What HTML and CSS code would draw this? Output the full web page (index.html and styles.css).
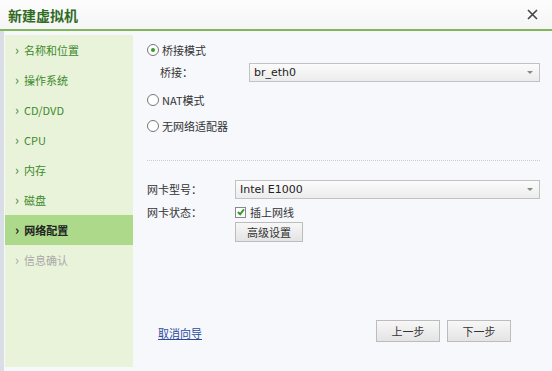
FILE: index.html
```html
<!DOCTYPE html>
<html>
<head>
    <title>新建虚拟机</title>
    <link rel="stylesheet" href="styles.css">
</head>
<body>
    <div class="dialog">
        <div class="title-bar">
            <span class="title">新建虚拟机</span>
            <svg class="close" width="11" height="11" viewBox="0 0 11 11">
                <path d="M1 1 L10 10 M10 1 L1 10" stroke="#444" stroke-width="1.6" fill="none"/>
            </svg>
        </div>
        <div class="content">
            <ul class="steps">
                <li>名称和位置</li>
                <li>操作系统</li>
                <li>CD/DVD</li>
                <li>CPU</li>
                <li>内存</li>
                <li>磁盘</li>
                <li class="active">网络配置</li>
                <li class="disabled">信息确认</li>
            </ul>
            <div class="main">
                <div class="mode-group">
                    <label class="radio-row"><span class="radio checked"></span>桥接模式</label>
                    <div class="field-row bridge-row">
                        <span class="bridge-label">桥接：</span>
                        <div class="select bridge-select">br_eth0<span class="arrow"></span></div>
                    </div>
                    <label class="radio-row nat-row"><span class="radio"></span>NAT模式</label>
                    <label class="radio-row"><span class="radio"></span>无网络适配器</label>
                </div>
                <div class="separator"></div>
                <div class="card-group">
                    <div class="field-row">
                        <span class="field-label">网卡型号：</span>
                        <div class="select card-select">Intel E1000<span class="arrow"></span></div>
                    </div>
                    <div class="field-row state-row">
                        <span class="field-label">网卡状态：</span>
                        <label class="check-row"><span class="checkbox"></span>插上网线</label>
                    </div>
                    <button type="button" class="btn advanced-btn">高级设置</button>
                </div>
                <div class="footer">
                    <a href="#" class="cancel-link">取消向导</a>
                    <div class="nav-buttons">
                        <button type="button" class="btn nav-btn">上一步</button>
                        <button type="button" class="btn nav-btn">下一步</button>
                    </div>
                </div>
            </div>
        </div>
    </div>
</body>
</html>
```
FILE: styles.css
```css
body {
    margin: 0;
    padding: 0;
    font-family: "Noto Sans CJK SC", "DejaVu Sans", sans-serif;
    font-size: 11px;
    color: #333;
}

.dialog {
    width: 552px;
    height: 371px;
    background-color: #f6f8fc;
    display: flex;
    flex-direction: column;
    overflow: hidden;
}

.title-bar {
    height: 29px;
    display: flex;
    align-items: center;
    justify-content: space-between;
    padding: 0 14px 0 8px;
    background: linear-gradient(#fdfdfd, #f5f5f5);
    border-bottom: 2px solid #7fb75a;
    flex-shrink: 0;
}

.title {
    font-size: 14px;
    font-weight: bold;
    color: #2f6b1f;
}

.close {
    display: block;
}

.content {
    flex: 1;
    display: flex;
    padding: 4px 0 4px 0;
    border-left: 4px solid #d9dde6;
}

.steps {
    list-style-type: none;
    margin: 0 0 0 1px;
    padding: 0;
    width: 128px;
    background-color: #e9f3da;
}

.steps li {
    height: 30px;
    line-height: 30px;
    padding-left: 10px;
    color: #3d8a2c;
}

.steps li::before {
    content: "\203A";
    margin-right: 5px;
    font-size: 13px;
}

.steps li.active {
    background-color: #acd98a;
    color: #222;
    font-weight: bold;
}

.steps li.disabled {
    color: #a8a8a8;
}

.main {
    flex: 1;
    display: flex;
    flex-direction: column;
    padding: 4px 12px 0 14px;
}

.radio-row {
    display: flex;
    align-items: center;
    height: 22px;
}

.nat-row {
    margin: 6px 0 4px 0;
}

.radio {
    width: 10px;
    height: 10px;
    border: 1px solid #777;
    border-radius: 50%;
    background-color: #fff;
    margin-right: 3px;
    position: relative;
}

.radio.checked::after {
    content: "";
    position: absolute;
    left: 3px;
    top: 3px;
    width: 4px;
    height: 4px;
    border-radius: 50%;
    background-color: #3a9a2a;
}

.field-row {
    display: flex;
    align-items: center;
    height: 20px;
}

.bridge-row {
    height: 22px;
}

.bridge-label {
    width: 89px;
    padding-left: 13px;
}

.field-label {
    width: 88px;
}

.select {
    flex: 1;
    height: 17px;
    line-height: 17px;
    border: 1px solid #c2c2c2;
    background: linear-gradient(#fbfbfb, #ececec);
    padding-left: 4px;
    font-family: "DejaVu Sans", sans-serif;
    font-size: 11px;
    color: #222;
    position: relative;
}

.arrow {
    position: absolute;
    right: 6px;
    top: 7px;
    border-left: 3px solid transparent;
    border-right: 3px solid transparent;
    border-top: 3px solid #888;
}

.separator {
    border-top: 1px dotted #c8ccd4;
    margin: 23px 0 18px 0;
}

.card-group {
    display: flex;
    flex-direction: column;
}

.state-row {
    margin-top: 3px;
}

.check-row {
    display: flex;
    align-items: center;
}

.checkbox {
    width: 9px;
    height: 9px;
    border: 1px solid #888;
    background-color: #fff;
    margin-right: 4px;
    position: relative;
}

.checkbox::after {
    content: "";
    position: absolute;
    left: 3px;
    top: 0;
    width: 2px;
    height: 5px;
    border: solid #3a9a2a;
    border-width: 0 2px 2px 0;
    transform: rotate(40deg);
}

.btn {
    font-family: "Noto Sans CJK SC", sans-serif;
    font-size: 11px;
    color: #333;
    background: linear-gradient(#f7f7f7, #e4e4e4);
    border: 1px solid #bcbcbc;
    padding: 0;
    cursor: pointer;
}

.advanced-btn {
    width: 68px;
    height: 20px;
    margin: 0 0 0 88px;
}

.footer {
    margin-top: auto;
    height: 47px;
    display: flex;
    justify-content: space-between;
    align-items: flex-start;
}

.cancel-link {
    color: #2b4c9b;
    line-height: 14px;
    margin: 6px 0 0 11px;
}

.nav-buttons {
    display: flex;
    gap: 7px;
    margin-right: 29px;
}

.nav-btn {
    width: 64px;
    height: 22px;
}
```
